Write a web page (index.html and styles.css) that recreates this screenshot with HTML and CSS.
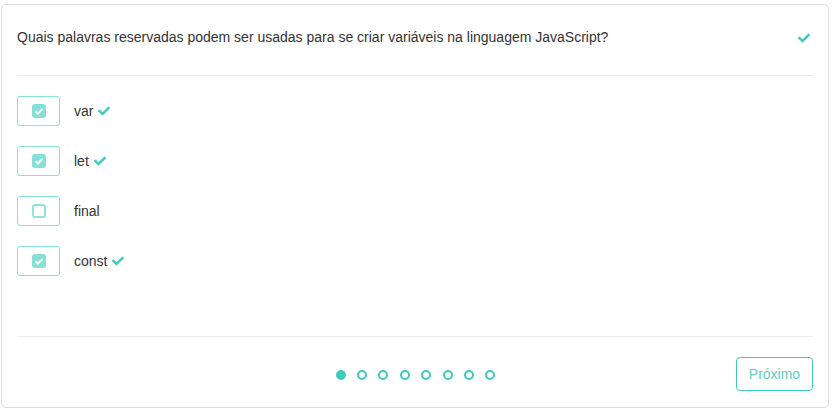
FILE: index.html
```html
<!DOCTYPE html>
<html lang="pt">
<head>
<meta charset="utf-8">
<link rel="stylesheet" href="styles.css">
</head>
<body>
<div class="card">
  <div class="card-header">
    <span class="question">Quais palavras reservadas podem ser usadas para se criar variáveis na linguagem JavaScript?</span>
    <svg class="check check-head" viewBox="0 0 512 512"><path d="M173.898 439.404l-166.4-166.4c-9.997-9.997-9.997-26.206 0-36.204l36.203-36.204c9.997-9.998 26.207-9.998 36.204 0L192 312.69 432.095 72.596c9.997-9.997 26.207-9.997 36.204 0l36.203 36.204c9.997 9.997 9.997 26.206 0 36.204l-294.4 294.401c-9.998 9.997-26.207 9.997-36.204-.001z"/></svg>
  </div>
  <div class="divider"></div>
  <div class="options">
    <div class="option">
      <div class="box"><span class="cb checked"><svg viewBox="0 0 14 14"><path d="M3.5 7.2l2.4 2.3 4.6-4.6" /></svg></span></div>
      <span class="label">var</span>
      <svg class="check" viewBox="0 0 512 512"><path d="M173.898 439.404l-166.4-166.4c-9.997-9.997-9.997-26.206 0-36.204l36.203-36.204c9.997-9.998 26.207-9.998 36.204 0L192 312.69 432.095 72.596c9.997-9.997 26.207-9.997 36.204 0l36.203 36.204c9.997 9.997 9.997 26.206 0 36.204l-294.4 294.401c-9.998 9.997-26.207 9.997-36.204-.001z"/></svg>
    </div>
    <div class="option">
      <div class="box"><span class="cb checked"><svg viewBox="0 0 14 14"><path d="M3.5 7.2l2.4 2.3 4.6-4.6" /></svg></span></div>
      <span class="label">let</span>
      <svg class="check" viewBox="0 0 512 512"><path d="M173.898 439.404l-166.4-166.4c-9.997-9.997-9.997-26.206 0-36.204l36.203-36.204c9.997-9.998 26.207-9.998 36.204 0L192 312.69 432.095 72.596c9.997-9.997 26.207-9.997 36.204 0l36.203 36.204c9.997 9.997 9.997 26.206 0 36.204l-294.4 294.401c-9.998 9.997-26.207 9.997-36.204-.001z"/></svg>
    </div>
    <div class="option">
      <div class="box"><span class="cb"></span></div>
      <span class="label">final</span>
    </div>
    <div class="option">
      <div class="box"><span class="cb checked"><svg viewBox="0 0 14 14"><path d="M3.5 7.2l2.4 2.3 4.6-4.6" /></svg></span></div>
      <span class="label">const</span>
      <svg class="check" viewBox="0 0 512 512"><path d="M173.898 439.404l-166.4-166.4c-9.997-9.997-9.997-26.206 0-36.204l36.203-36.204c9.997-9.998 26.207-9.998 36.204 0L192 312.69 432.095 72.596c9.997-9.997 26.207-9.997 36.204 0l36.203 36.204c9.997 9.997 9.997 26.206 0 36.204l-294.4 294.401c-9.998 9.997-26.207 9.997-36.204-.001z"/></svg>
    </div>
  </div>
  <div class="divider"></div>
  <div class="footer">
    <div class="dots">
      <span class="dot active"></span>
      <span class="dot"></span>
      <span class="dot"></span>
      <span class="dot"></span>
      <span class="dot"></span>
      <span class="dot"></span>
      <span class="dot"></span>
      <span class="dot"></span>
    </div>
    <button class="next">Próximo</button>
  </div>
</div>
</body>
</html>
```

FILE: styles.css
```css
* { box-sizing: border-box; }
html, body { margin: 0; padding: 0; background: #fff; }
body {
  font-family: "Liberation Sans", Arial, sans-serif;
  font-size: 14px;
  color: #333;
  padding: 4px 4px 3px 1px;
}
.card {
  width: 828px;
  height: 404px;
  border: 1px solid #dcdcdc;
  border-radius: 5px;
  display: flex;
  flex-direction: column;
}
.card-header {
  display: flex;
  align-items: center;
  justify-content: space-between;
  padding: 22px 17px 28px 15px;
  line-height: 20px;
}
.check {
  width: 14px;
  height: 12px;
  fill: #3ecbbd;
  margin-left: 4px;
}
.check-head { margin-top: 1px; }
.divider {
  height: 1px;
  background: #ebebeb;
  margin: 0 15px;
}
.options {
  flex: 1;
  display: flex;
  flex-direction: column;
  gap: 20px;
  padding: 20px 15px 0 15px;
}
.option {
  display: flex;
  align-items: center;
  height: 30px;
}
.box {
  width: 43px;
  height: 30px;
  border: 1px solid #86e2d8;
  border-radius: 3px;
  display: flex;
  align-items: center;
  justify-content: center;
  margin-right: 14px;
}
.cb {
  width: 14px;
  height: 14px;
  border: 2px solid #8ee3da;
  border-radius: 3px;
  display: flex;
}
.cb.checked {
  background: #86e0d7;
  border-color: #86e0d7;
  border-width: 0;
}
.cb svg {
  width: 14px;
  height: 14px;
  fill: none;
  stroke: #fff;
  stroke-width: 2;
}
.label { line-height: 20px; }
.footer {
  display: grid;
  grid-template-columns: 1fr auto 1fr;
  align-items: center;
  padding: 20px 15px 16px 15px;
}
.dots {
  grid-column: 2;
  display: flex;
  gap: 11.43px;
  margin-top: 2px;
  margin-left: 1px;
}
.dot {
  width: 10px;
  height: 10px;
  border-radius: 50%;
  border: 2px solid #3ecbbd;
}
.dot.active { background: #3ecbbd; }
.next {
  grid-column: 3;
  justify-self: end;
  width: 77px;
  height: 34px;
  border: 1px solid #3ecbbd;
  border-radius: 4px;
  background: #fff;
  color: #5ccfc3;
  font-family: "Liberation Sans", Arial, sans-serif;
  font-size: 14px;
  padding: 0;
}
```
